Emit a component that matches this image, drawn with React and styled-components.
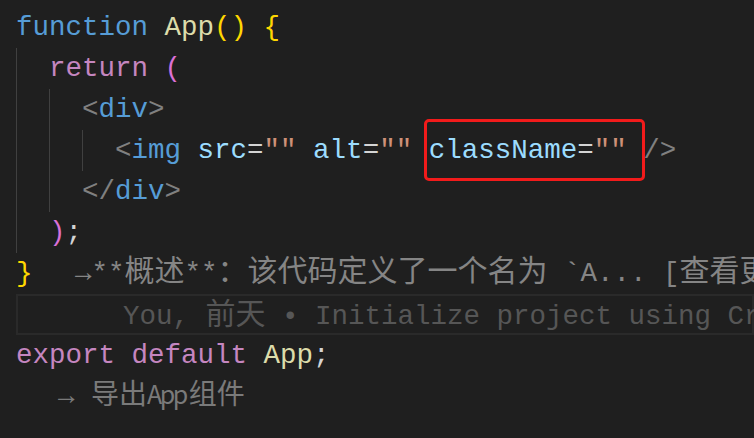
import React from "react";
import styled, { createGlobalStyle } from "styled-components";

const Global = createGlobalStyle`
  html, body { margin: 0; padding: 0; background: #1f1f1f; }
  body { overflow: hidden; }
`;

const Editor = styled.div`
  width: 754px;
  height: 438px;
  overflow: hidden;
  background: #1f1f1f;
  padding-left: 16px;
  box-sizing: border-box;
  font-family: "Liberation Mono", "Noto Sans CJK SC", monospace;
  font-size: 27.5px;
  color: #d4d4d4;
`;

const Lines = styled.div`
  display: flex;
  flex-direction: column;
  margin-top: -34.5px;
`;

const Line = styled.div`
  height: 41px;
  line-height: 41px;
  white-space: pre;
  display: flex;
  align-items: ${(p) => (p.$top ? "flex-start" : "stretch")};
  box-sizing: border-box;
  overflow: ${(p) => (p.$top ? "hidden" : "visible")};
  ${(p) =>
    p.$active &&
    `
    border: 2px solid #2a2a2a;
    line-height: 37px;
  `}
`;

const Indent = styled.span`
  display: inline-block;
  width: 33px;
  flex: none;
  box-shadow: inset 1px 0 0 #404040;
`;

const Code = styled.span`
  display: inline-block;
`;

const T = styled.span`
  color: ${(p) => p.$c};
`;

const Cjk = styled.span`
  font-family: "Noto Sans CJK SC", sans-serif;
  font-size: 30px;
  line-height: 1;
`;

const Hint = styled.span`
  color: #858585;
  margin-left: ${(p) => p.$ml || 0}px;
`;

const Blame = styled.span`
  color: #565656;
  margin-left: 105px;
`;

const ProseHint = styled.span`
  color: #7a7a7a;
  margin-left: ${(p) => p.$ml}px;
  line-height: ${(p) => p.$lh || 41}px;
`;

const Prose = styled.span`
  font-family: "Noto Sans CJK SC", sans-serif;
  font-size: 28px;
  line-height: 1;
`;

const Narrow = styled.span`
  font-family: "Noto Sans CJK SC", sans-serif;
  font-size: 25px;
  letter-spacing: -2.5px;
  line-height: 1;
  margin-right: 3px;
`;

const Mark = styled.span`
  position: relative;
  display: inline-block;
  &::after {
    content: "";
    position: absolute;
    left: -5px;
    right: -18px;
    top: -10.5px;
    bottom: -10.5px;
    border: 3.5px solid #f21b1b;
    border-radius: 5px;
    pointer-events: none;
  }
`;

const C = {
  kw: "#569cd6",
  fn: "#dcdcaa",
  b1: "#ffd700",
  b2: "#da70d6",
  ctl: "#c586c0",
  tag: "#808080",
  attr: "#9cdcfe",
  str: "#ce9178",
  pl: "#d4d4d4",
};

export default function App() {
  return (
    <>
      <Global />
      <Editor>
        <Lines>
          <Line $top>
            <ProseHint $ml={32} $lh={38}>
              <Prose>→ 定义一个名为App的函数组件，返回包含图片的div元素，用于页面展示</Prose>
            </ProseHint>
          </Line>
          <Line>
            <Code>
              <T $c={C.kw}>function</T> <T $c={C.fn}>App</T>
              <T $c={C.b1}>()</T> <T $c={C.b1}>{"{"}</T>
            </Code>
          </Line>
          <Line>
            <Indent />
            <Code>
              <T $c={C.ctl}>return</T> <T $c={C.b2}>(</T>
            </Code>
          </Line>
          <Line>
            <Indent />
            <Indent />
            <Code>
              <T $c={C.tag}>&lt;</T>
              <T $c={C.kw}>div</T>
              <T $c={C.tag}>&gt;</T>
            </Code>
          </Line>
          <Line>
            <Indent />
            <Indent />
            <Indent />
            <Code>
              <T $c={C.tag}>&lt;</T>
              <T $c={C.kw}>img</T> <T $c={C.attr}>src</T>
              <T $c={C.pl}>=</T>
              <T $c={C.str}>""</T> <T $c={C.attr}>alt</T>
              <T $c={C.pl}>=</T>
              <T $c={C.str}>""</T>{" "}
              <Mark>
                <T $c={C.attr}>className</T>
                <T $c={C.pl}>=</T>
                <T $c={C.str}>""</T>
              </Mark>{" "}
              <T $c={C.tag}>/&gt;</T>
            </Code>
          </Line>
          <Line>
            <Indent />
            <Indent />
            <Code>
              <T $c={C.tag}>&lt;/</T>
              <T $c={C.kw}>div</T>
              <T $c={C.tag}>&gt;</T>
            </Code>
          </Line>
          <Line>
            <Indent />
            <Code>
              <T $c={C.b2}>)</T>
              <T $c={C.pl}>;</T>
            </Code>
          </Line>
          <Line>
            <Code>
              <T $c={C.b1}>{"}"}</T>
              <Hint $ml={42.5}>
                →**<Cjk>概述</Cjk>**<Cjk>：该代码定义了一个名为</Cjk> `A... [<Cjk>查看更多</Cjk>]
              </Hint>
            </Code>
          </Line>
          <Line $active>
            <Blame>
              You, <Cjk>前天</Cjk> • Initialize project using Create React App
            </Blame>
          </Line>
          <Line>
            <Code>
              <T $c={C.ctl}>export</T> <T $c={C.ctl}>default</T>{" "}
              <T $c={C.fn}>App</T>
              <T $c={C.pl}>;</T>
            </Code>
          </Line>
          <Line>
            <ProseHint $ml={42}>
              → <Prose>导出</Prose>
              <Narrow>App</Narrow>
              <Prose>组件</Prose>
            </ProseHint>
          </Line>
        </Lines>
      </Editor>
    </>
  );
}
